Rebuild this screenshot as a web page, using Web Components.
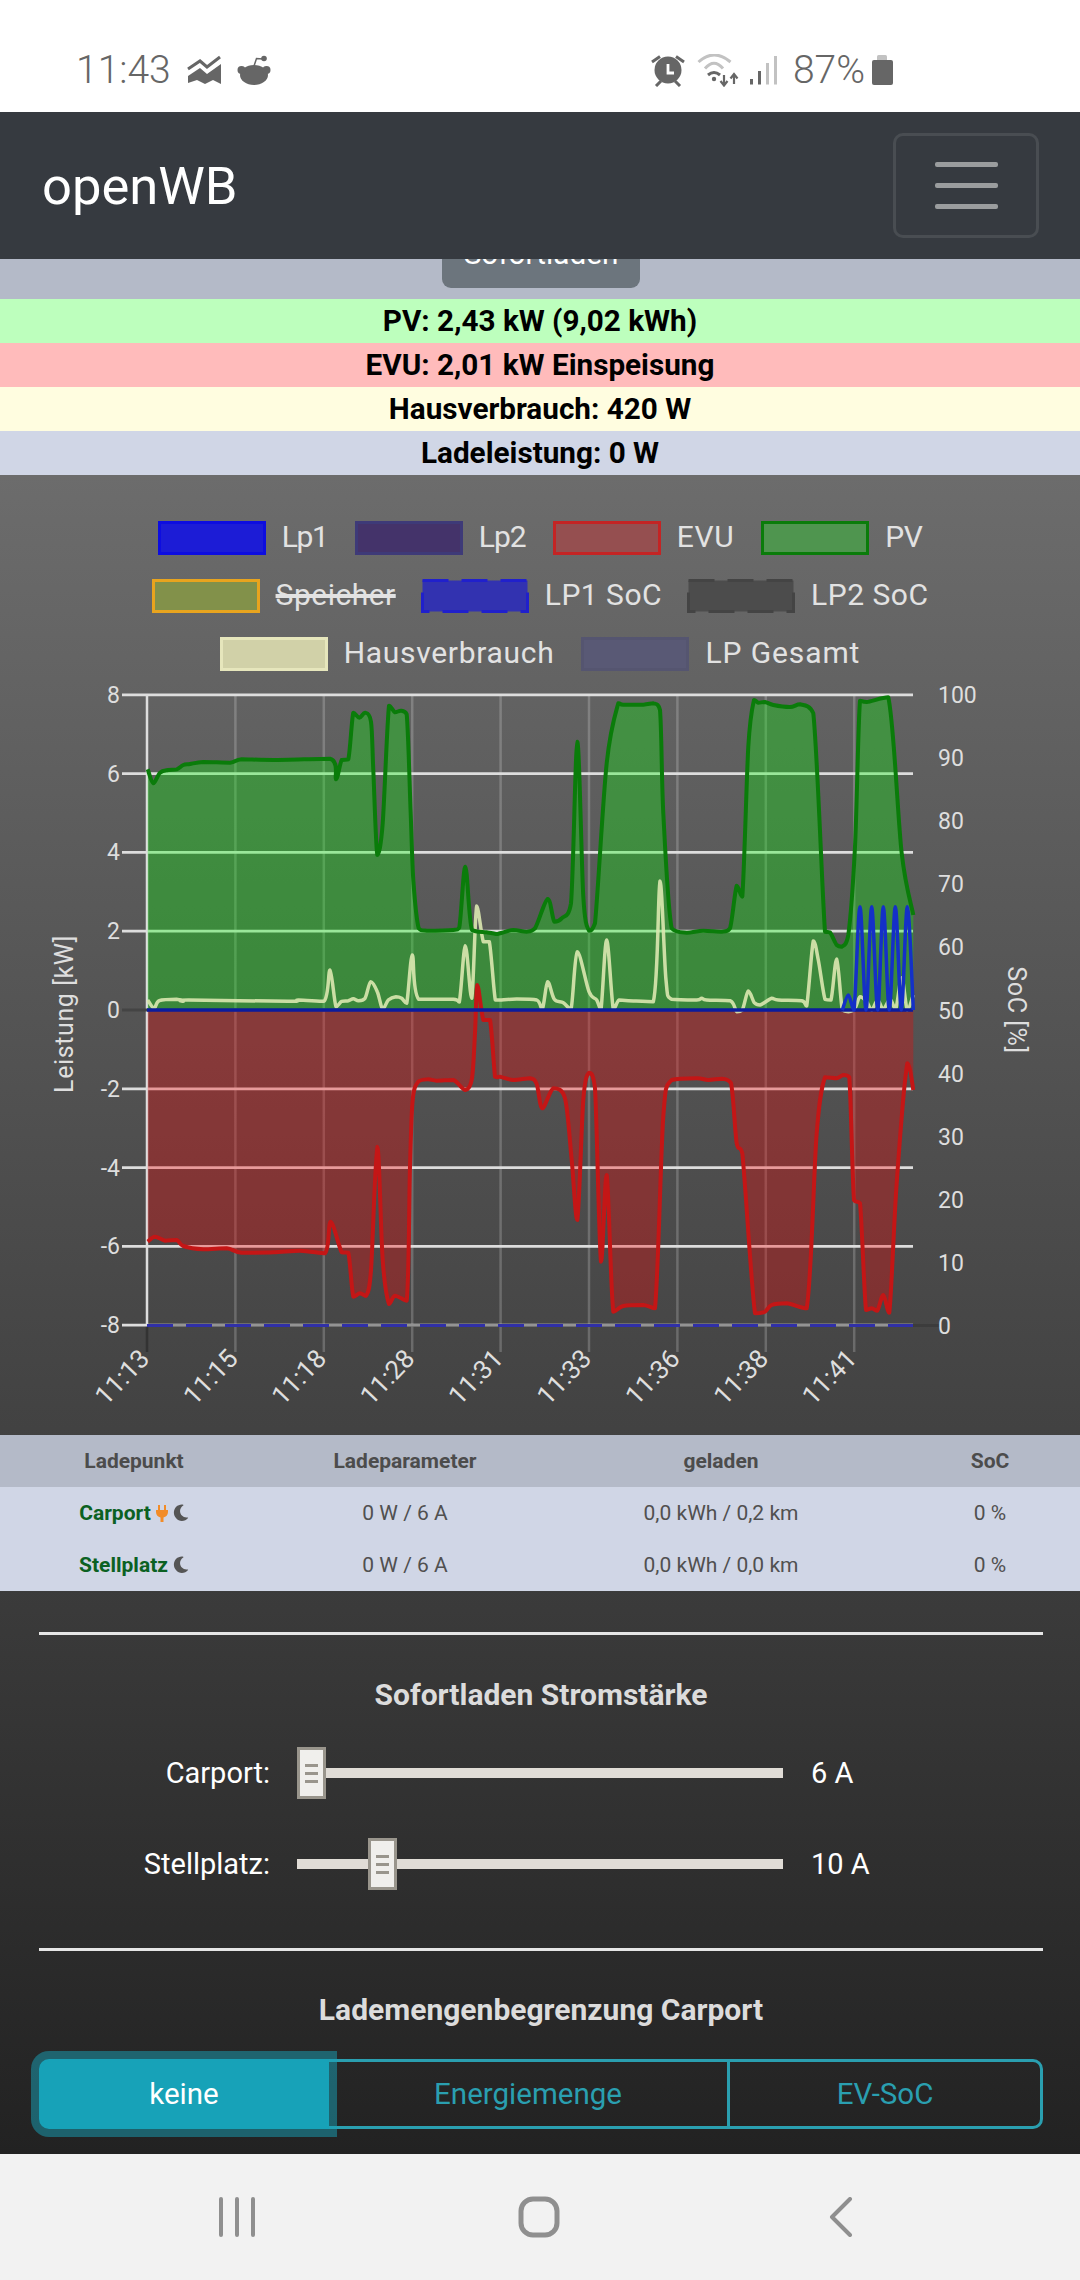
<!DOCTYPE html>
<html lang="de">
<head>
<meta charset="utf-8">
<title>openWB</title>
<style>
  html, body { margin: 0; padding: 0; }
  body { width: 1080px; height: 2280px; overflow: hidden; font-family: Roboto, "Liberation Sans", sans-serif; background: #f2f2f2; }
  main { display: block; height: 1679px; background: linear-gradient(#6c6c6c, #222222); }
</style>
</head>
<body>
<ow-statusbar></ow-statusbar>
<ow-navbar>openWB</ow-navbar>
<ow-modebar>Sofortladen</ow-modebar>
<ow-readout color="#bdffbd">PV: 2,43 kW (9,02 kWh)</ow-readout>
<ow-readout color="#ffbbbb">EVU: 2,01 kW Einspeisung</ow-readout>
<ow-readout color="#fffde0">Hausverbrauch: 420 W</ow-readout>
<ow-readout color="#d0d6e6">Ladeleistung: 0 W</ow-readout>
<main>
  <ow-legend></ow-legend>
  <ow-chart></ow-chart>
  <ow-lp-table></ow-lp-table>
  <ow-controls>
    <ow-section-title first>Sofortladen Stromstärke</ow-section-title>
    <ow-slider label="Carport:" value="6 A" pos="0"></ow-slider>
    <ow-slider label="Stellplatz:" value="10 A" pos="71"></ow-slider>
    <ow-section-title>Lademengenbegrenzung Carport</ow-section-title>
    <ow-btn-group></ow-btn-group>
  </ow-controls>
</main>
<ow-softkeys></ow-softkeys>

<script>
// every element is the same few lines, so keep the boilerplate here
class Base extends HTMLElement {
  constructor() {
    super()
    this.attachShadow({ mode: 'open' })
  }
  connectedCallback() {
    this.shadowRoot.innerHTML = this.render()
  }
}

const GREY = '#666'

class StatusBar extends Base {
  render() {
    return `
    <style>
      :host { display: flex; align-items: center; height: 112px; background: #fff; color: ${GREY}; font-size: 39px; font-weight: 300; padding: 0 187px 0 76px; box-sizing: border-box; }
      .t { line-height: 40px; margin-top: 28px; }
      svg { display: block; margin-top: 28px; }
      .sp { flex: 1; }
    </style>
    <span class="t">11:43</span>
    <svg style="margin-left:16px" viewBox="187 54 35 30" width="35" height="30" fill="${GREY}">
      <path d="M188 68L200 60L207 66L220 56" fill="none" stroke="${GREY}" stroke-width="3"/>
      <path d="M188 75L200 67L207 73L221 63V83L213 79L205 83L197 79L188 82Z"/>
    </svg>
    <svg style="margin-left:15px" viewBox="237 52 34 32" width="34" height="32" fill="${GREY}">
      <ellipse cx="254" cy="73" rx="14" ry="10"/>
      <circle cx="241.500" cy="68" r="4"/><circle cx="266.500" cy="68" r="4"/>
      <path d="M254 64L256.500 56.500L263 57" fill="none" stroke="${GREY}" stroke-width="1.500"/>
      <circle cx="264" cy="56.500" r="2.800"/>
    </svg>
    <span class="sp"></span>
    <svg viewBox="654 52 34 33" width="34" height="33">
      <circle cx="671" cy="68" r="13.500" fill="${GREY}"/>
      <path d="M671 62V71H677" fill="none" stroke="#fff" stroke-width="2.800"/>
      <path d="M655 60L663 54.500M687 60L679 54.500M659 84L664 79M683 84L678 79" stroke="${GREY}" stroke-width="3"/>
    </svg>
    <svg style="margin-left:12px" viewBox="700 52 42 33" width="42" height="33" fill="none">
      <path d="M701.500 60Q717 46 733.500 60" stroke="#c2c2c2" stroke-width="3"/>
      <path d="M708 66.500Q717 56 726 66.500" stroke="#c2c2c2" stroke-width="3"/>
      <path d="M711 73Q717 68 723 73" stroke="${GREY}" stroke-width="3"/>
      <circle cx="717" cy="77" r="2.200" fill="${GREY}"/>
      <path d="M727 73V83M723.500 79L727 83.500L730.500 79M737 82V73M733.500 76.500L737 72L740.500 76.500" stroke="${GREY}" stroke-width="2.200"/>
    </svg>
    <svg style="margin-left:10px" viewBox="752 54 30 30" width="30" height="30">
      <rect x="753" y="78" width="3" height="5.500" fill="${GREY}"/>
      <rect x="761" y="70" width="3" height="13.500" fill="${GREY}"/>
      <rect x="769" y="62" width="3" height="21.500" fill="#c2c2c2"/>
      <rect x="777" y="55" width="3" height="28.500" fill="#c2c2c2"/>
    </svg>
    <span class="t" style="margin-left:14px">87%</span>
    <svg style="margin-left:7px" viewBox="872 52 21 32" width="21" height="32">
      <path d="M877 58V54.500Q877 53 878.500 53H885.500Q887 53 887 54.500V58Z" fill="#c2c2c2"/>
      <rect x="872" y="58" width="21" height="25" rx="2" fill="${GREY}"/>
    </svg>`
  }
}

class Navbar extends Base {
  render() {
    return `
    <style>
      :host { display: flex; align-items: center; justify-content: space-between; height: 147px; background: #363a40; color: #fff; padding: 0 41px 0 42px; box-sizing: border-box; }
      .brand { font-size: 52.500px; line-height: 60px; }
      button { width: 146px; height: 105px; background: none; border: 3px solid #494d52; border-radius: 10px; display: flex; flex-direction: column; align-items: center; justify-content: center; gap: 16px; padding: 0; }
      i { display: block; width: 63px; height: 5px; border-radius: 2px; background: #9a9c9e; }
    </style>
    <span class="brand"><slot></slot></span>
    <button><i></i><i></i><i></i></button>`
  }
}

class ModeBar extends Base {
  render() {
    return `
    <style>
      :host { display: block; height: 40px; padding-left: 2px; box-sizing: border-box; background: #b4bac8; overflow: hidden; }
      div { width: 198px; height: 78px; margin: -49px auto 0; background: #6c757d; border-radius: 9px; color: #fff; font-size: 29.700px; text-align: center; line-height: 87px; }
    </style>
    <div><slot></slot></div>`
  }
}

class Readout extends Base {
  render() {
    return `
    <style>
      :host { display: block; height: 44px; line-height: 44px; text-align: center; font-weight: 700; font-size: 29.700px; color: #000; background: ${this.getAttribute('color')}; }
    </style>
    <slot></slot>`
  }
}

// ls = letter spacing, the reference has uneven glyph advances
const LEGEND = [
  { gap: 27, items: [
    { t: 'Lp1', bg: '#1c1cd6', bd: '#0d0de0', ls: -1.3 },
    { t: 'Lp2', bg: '#44336a', bd: '#3e3a78', ls: -.9 },
    { t: 'EVU', bg: '#954f50', bd: '#c42424', ls: .6 },
    { t: 'PV', bg: '#4f954f', bd: '#0a7c0a', ls: -.5 },
  ] },
  { gap: 25, items: [
    { t: 'Speicher', bg: '#82914a', bd: '#e8a41e', off: true, ls: .5 },
    { t: 'LP1 SoC', bg: '#3232b0', bd: '#2020cc', dash: true, ls: .5 },
    { t: 'LP2 SoC', bg: '#4c4c4c', bd: '#444', dash: true, ls: .5 },
  ] },
  { gap: 27, items: [
    { t: 'Hausverbrauch', bg: '#d1d1a8', bd: '#e6e6bc', ls: .7 },
    { t: 'LP Gesamt', bg: '#595975', bd: '#555570', ls: .9 },
  ] },
]

const swatch = i => `<svg width="108" height="34"><rect x="1.500" y="1.500" width="105" height="31" fill="${i.bg}" stroke="${i.bd}" stroke-width="3" ${i.dash ? 'stroke-dasharray="26 13"' : ''}/></svg>`

class Legend extends Base {
  render() {
    const rows = LEGEND.map(row => `<div class="row" style="gap:${row.gap}px">${row.items.map(i => `
      <span class="it">
        ${swatch(i)}
        <span class="${i.off ? 'off' : ''}" style="letter-spacing:${i.ls}px">${i.t}</span>
      </span>`).join('')}</div>`).join('')
    return `
    <style>
      :host { display: flex; flex-direction: column; gap: 24px; height: 205px; padding-top: 46px; box-sizing: border-box; color: #e2e2e2; font-size: 30px; }
      .row { display: flex; justify-content: center; height: 34px; line-height: 32px; }
      .it { display: flex; gap: 16px; }
      svg { display: block; }
      .off { text-decoration: line-through; text-decoration-thickness: 4px; }
    </style>
    ${rows}`
  }
}

// points read off the reference at 3x, [x, y] relative to the crop corner
const left = (pts, oy) => pts.map(([x, y]) => [40 + x / 3, oy + y / 3])
const right = (pts, oy) => pts.map(([x, y]) => [500 + x / 3, oy + y / 3])

const PV = [
  ...left([[323,268],[340,310],[360,278],[385,270],[410,268],[430,255],[450,252],[490,246],[570,248],[605,238],[700,240],[870,236],[888,298],[905,240],[925,238],[940,98],[958,113],[975,98],[993,125],[1000,270],[1012,525],[1028,430],[1047,77],[1065,97],[1082,92],[1100,103],[1112,400],[1120,600],[1136,745],[1160,752],[1240,750],[1258,742],[1276,560],[1296,750],[1340,757],[1372,762]], 680),
  ...right([[0,760],[40,750],[80,755],[105,745],[143,657],[163,725],[185,715],[213,670],[232,185],[250,650],[267,752],[285,730],[320,250],[355,70],[370,74],[430,74],[460,70],[480,90],[490,400],[515,745],[560,758],[610,752],[665,755],[690,745],[710,617],[727,650],[745,200],[762,60],[775,68],[795,66],[820,75],[870,81],[900,73],[940,100],[975,755],[990,757],[1010,795],[1025,800],[1045,765],[1065,500],[1080,62],[1100,66],[1165,52],[1205,520],[1240,705]], 680),
]
const EVU = [
  ...left([[323,725],[345,710],[375,722],[410,720],[430,738],[490,748],[560,745],[605,758],[700,757],[780,752],[855,760],[872,665],[905,757],[925,758],[940,890],[960,880],[978,888],[993,810],[1012,440],[1028,780],[1047,912],[1065,887],[1100,902],[1110,500],[1118,300],[1135,245],[1165,238],[1190,242],[1240,240],[1276,270],[1296,235],[1305,100],[1312,-45],[1330,60],[1350,60],[1365,230],[1372,232]], 1000),
  ...right([[0,230],[40,240],[90,235],[110,252],[127,325],[160,265],[195,295],[215,480],[232,660],[250,300],[267,218],[285,265],[303,785],[320,525],[340,935],[370,918],[430,915],[465,925],[490,350],[515,240],[590,235],[625,240],[665,236],[693,250],[710,430],[727,460],[765,940],[795,935],[815,915],[860,910],[920,925],[950,400],[975,232],[1010,235],[1030,225],[1048,232],[1062,600],[1080,610],[1098,930],[1115,925],[1132,932],[1150,885],[1168,938],[1190,550],[1222,190],[1240,270]], 1000),
]
const HOUSE = [
  ...left([[323,960],[342,985],[358,962],[410,958],[430,964],[445,960],[745,964],[775,960],[852,964],[870,870],[888,980],[905,964],[925,962],[940,956],[955,962],[975,955],[992,905],[1012,935],[1028,988],[1045,960],[1068,950],[1085,955],[1100,970],[1117,825],[1136,958],[1240,958],[1258,966],[1276,797],[1295,955],[1310,678],[1330,785],[1348,785],[1366,960]], 680),
  ...right([[0,960],[50,957],[110,960],[127,988],[143,905],[163,958],[190,968],[213,988],[232,815],[267,935],[290,960],[303,988],[320,780],[340,988],[357,960],[385,962],[460,965],[480,603],[498,900],[515,958],[590,960],[605,955],[620,960],[690,962],[710,995],[727,990],[745,933],[763,968],[780,975],[815,955],[835,960],[905,962],[920,978],[940,783],[955,840],[975,958],[993,960],[1010,837],[1027,990],[1045,995],[1065,985],[1080,950],[1100,965],[1115,990],[1133,960],[1150,988],[1170,958],[1187,988],[1205,893],[1222,990],[1240,945]], 680),
]
const LP1 = right([[1027,990],[1045,945],[1062,990],[1080,680],[1098,990],[1115,680],[1133,990],[1150,680],[1168,990],[1186,680],[1204,990],[1222,680],[1240,990]], 680)

const X0 = 147, X1 = 913, ZERO = 1010
const f = n => n.toFixed(1)
const clamp = (v, a, b) => Math.min(Math.max(a, b), Math.max(Math.min(a, b), v))

// soft corners like the chart library's bezier lines, y clamped so spikes don't overshoot
function curve(pts, t = 0.16) {
  let d = `M${f(pts[0][0])} ${f(pts[0][1])}`
  for (let i = 0; i < pts.length - 1; i++) {
    const p0 = pts[i - 1] || pts[i], p1 = pts[i], p2 = pts[i + 1], p3 = pts[i + 2] || p2
    const c1y = clamp(p1[1] + (p2[1] - p0[1]) * t, p1[1], p2[1])
    const c2y = clamp(p2[1] - (p3[1] - p1[1]) * t, p1[1], p2[1])
    d += `C${f(p1[0] + (p2[0] - p0[0]) * t)} ${f(c1y)} ${f(p2[0] - (p3[0] - p1[0]) * t)} ${f(c2y)} ${f(p2[0])} ${f(p2[1])}`
  }
  return d
}
const area = pts => `${curve(pts)}L${f(pts[pts.length - 1][0])} ${ZERO}L${f(pts[0][0])} ${ZERO}Z`

class Chart extends Base {
  render() {
    const hy = [8, 6, 4, 2, 0, -2, -4, -6, -8].map(v => ({ v, y: ZERO - v * 39.4 }))
    const sy = [100, 90, 80, 70, 60, 50, 40, 30, 20, 10, 0].map((v, i) => ({ v, y: 695 + i * 63.1 }))
    const xs = ['11:13', '11:15', '11:18', '11:28', '11:31', '11:33', '11:36', '11:38', '11:41']
      .map((t, i) => ({ t, x: X0 + i * 88.4 }))
    return `
    <style>
      :host { display: block; height: 755px; }
      svg { display: block; }
      text { font-family: Roboto, sans-serif; fill: #dedede; font-size: 23px; }
      .ln { fill: none; stroke-linejoin: round; }
    </style>
    <svg width="1080" height="755" viewBox="0 680 1080 755">
      ${xs.slice(1).map(a => `<line x1="${a.x}" x2="${a.x}" y1="695" y2="1352" stroke="#fff" stroke-opacity=".2" stroke-width="2.500"/>`).join('')}
      <line x1="${X0}" x2="${X0}" y1="695" y2="1326" stroke="#ddd" stroke-width="2.500"/>
      <line x1="${X0}" x2="${X0}" y1="1326" y2="1352" stroke="#333" stroke-width="2.500"/>
      ${hy.map(h => `<line x1="122" x2="${X1}" y1="${h.y}" y2="${h.y}" stroke="${h.v === 0 ? '#444' : '#ddd'}" stroke-width="2.800"/>`).join('')}
      <line x1="${X1}" x2="940" y1="1325.500" y2="1325.500" stroke="#3c3c3c" stroke-width="2.800"/>

      <path d="${area(PV)}" fill="rgba(0,255,0,.3)"/>
      <path d="${area(EVU)}" fill="rgba(255,0,0,.3)"/>
      <path class="ln" d="${curve(HOUSE)}" stroke="#dce8b0" stroke-width="3.500" stroke-opacity=".9"/>
      <path class="ln" d="${curve(PV)}" stroke="#0a7c0a" stroke-width="4"/>
      <path class="ln" d="${curve(EVU)}" stroke="#c41616" stroke-width="4"/>
      <line x1="${X0}" x2="${X1}" y1="${ZERO}" y2="${ZERO}" stroke="#0c1c9e" stroke-width="3.500"/>
      <path class="ln" d="${curve(LP1)}" stroke="#1430c8" stroke-width="3.500"/>
      <line x1="${X0}" x2="${X1}" y1="1325.500" y2="1325.500" stroke="#555" stroke-opacity=".55" stroke-width="3"/>
      <line x1="${X0}" x2="${X1}" y1="1325.500" y2="1325.500" stroke="#3030a8" stroke-width="3" stroke-dasharray="26 13"/>

      ${hy.map(h => `<text x="120" y="${h.y + 8}" text-anchor="end">${h.v}</text>`).join('')}
      ${sy.map(s => `<text x="938" y="${s.y + 8}">${s.v}</text>`).join('')}
      ${xs.map(a => `<text text-anchor="end" transform="translate(${a.x + 4} 1360) rotate(-46)" style="font-size:26px">${a.t}</text>`).join('')}
      <text transform="translate(73 1014) rotate(-90)" text-anchor="middle" style="font-size:25px;letter-spacing:.6px">Leistung [kW]</text>
      <text transform="translate(1008 1010) rotate(90)" text-anchor="middle" style="font-size:25px;letter-spacing:.6px">SoC [%]</text>
    </svg>`
  }
}

const MOON = `<svg viewBox="0 0 512 512" width="16" height="18" fill="#555"><path d="M283 512c79 0 151-36 199-95 7-9-1-22-12-20-128 24-245-74-245-203 0-74 40-143 104-180 10-6 8-20-4-23-14-2-28-4-42-4C142-13 28 102 28 243s114 269 255 269z"/></svg>`
const PLUG = `<svg viewBox="0 0 12 17" width="12" height="17" fill="#f28c28"><path d="M2 0h2v5H2zM8 0h2v5H8zM0 5h12v2c0 3-2 5-4.500 5.500V17h-3v-4.500C2 12 0 10 0 7z"/></svg>`

class LpTable extends Base {
  render() {
    return `
    <style>
      :host { display: grid; grid-template-columns: 268px 274px 358px 180px; grid-auto-rows: 52px; background: #d0d6e6; color: #505050; font-size: 21px; text-align: center; line-height: 52px; }
      .h { background: #b4bac8; font-weight: 700; color: #4c4c4c; }
      .n { display: flex; align-items: center; justify-content: center; gap: 5px; font-weight: 700; color: #0b6122; }
    </style>
    <div class="h">Ladepunkt</div><div class="h">Ladeparameter</div><div class="h">geladen</div><div class="h">SoC</div>
    <div class="n">Carport ${PLUG}${MOON}</div><div>0 W / 6 A</div><div>0,0 kWh / 0,2 km</div><div>0 %</div>
    <div class="n">Stellplatz ${MOON}</div><div>0 W / 6 A</div><div>0,0 kWh / 0,0 km</div><div>0 %</div>`
  }
}

class Controls extends Base {
  render() {
    return `
    <style>
      :host { display: block; padding: 0 37px 0 39px; }
    </style>
    <slot></slot>`
  }
}

class SectionTitle extends Base {
  render() {
    const first = this.hasAttribute('first')
    return `
    <style>
      :host { display: block; }
      hr { margin: ${first ? 41 : 58}px 0 0; border: 0; height: 3px; background: #e6e6e6; }
      h2 { margin: 0; font-size: 30px; font-weight: 700; color: #dcdcdc; text-align: center; height: ${first ? 112 : 108}px; line-height: ${first ? 120 : 118}px; }
    </style>
    <hr><h2><slot></slot></h2>`
  }
}

class Slider extends Base {
  render() {
    return `
    <style>
      :host { display: grid; grid-template-columns: 231px 486px auto; column-gap: 27px; align-items: center; height: 52px; margin-bottom: 39px; color: #fff; font-size: 29px; }
      .l { text-align: right; }
      .track { position: relative; height: 10px; background: #e0dcd6; }
      .v { margin-left: 1px; }
      .handle { position: absolute; top: -21px; left: ${this.getAttribute('pos')}px; width: 29px; height: 52px; box-sizing: border-box; background: #f0efec; border: 3px solid #99958c; display: flex; flex-direction: column; align-items: center; justify-content: center; gap: 5px; }
      .handle i { display: block; width: 13px; height: 3px; background: #99958c; }
    </style>
    <span class="l">${this.getAttribute('label')}</span>
    <div class="track"><div class="handle"><i></i><i></i><i></i></div></div>
    <span class="v">${this.getAttribute('value')}</span>`
  }
}

class BtnGroup extends Base {
  render() {
    return `
    <style>
      :host { display: grid; grid-template-columns: 290px 401px 313px; height: 70px; width: 1004px; font-size: 29.500px; color: #2a9fb0; text-align: center; line-height: 64px; }
      div { border: 3px solid #2a9fb0; margin-left: -3px; }
      .a { margin-left: 0; background: #17a2b8; border-color: #17a2b8; color: #fff; border-radius: 10px 0 0 10px; box-shadow: 0 0 0 8px rgba(23,162,184,.5); position: relative; }
      .z { border-radius: 0 10px 10px 0; }
    </style>
    <div class="a">keine</div><div>Energiemenge</div><div class="z">EV-SoC</div>`
  }
}

class Softkeys extends Base {
  render() {
    return `
    <style>
      :host { display: grid; grid-template-columns: repeat(3, 302px); justify-items: center; align-items: center; height: 126px; padding-left: 86px; box-sizing: border-box; background: #f2f2f2; }
      svg { display: block; }
    </style>
    <svg viewBox="0 0 36 40" width="36" height="40" stroke="#8f8f8f" stroke-width="4" stroke-linecap="round"><path d="M2 2V38M18 2V38M34 2V38"/></svg>
    <svg viewBox="0 0 42 42" width="42" height="42" fill="none" stroke="#8f8f8f" stroke-width="5"><rect x="3" y="3" width="36" height="36" rx="12"/></svg>
    <svg viewBox="0 0 24 40" width="24" height="40" fill="none" stroke="#8f8f8f" stroke-width="4" stroke-linecap="round" stroke-linejoin="round"><path d="M21 2L3 20L21 38"/></svg>`
  }
}

customElements.define('ow-statusbar', StatusBar)
customElements.define('ow-navbar', Navbar)
customElements.define('ow-modebar', ModeBar)
customElements.define('ow-readout', Readout)
customElements.define('ow-legend', Legend)
customElements.define('ow-chart', Chart)
customElements.define('ow-lp-table', LpTable)
customElements.define('ow-controls', Controls)
customElements.define('ow-section-title', SectionTitle)
customElements.define('ow-slider', Slider)
customElements.define('ow-btn-group', BtnGroup)
customElements.define('ow-softkeys', Softkeys)
</script>
</body>
</html>
